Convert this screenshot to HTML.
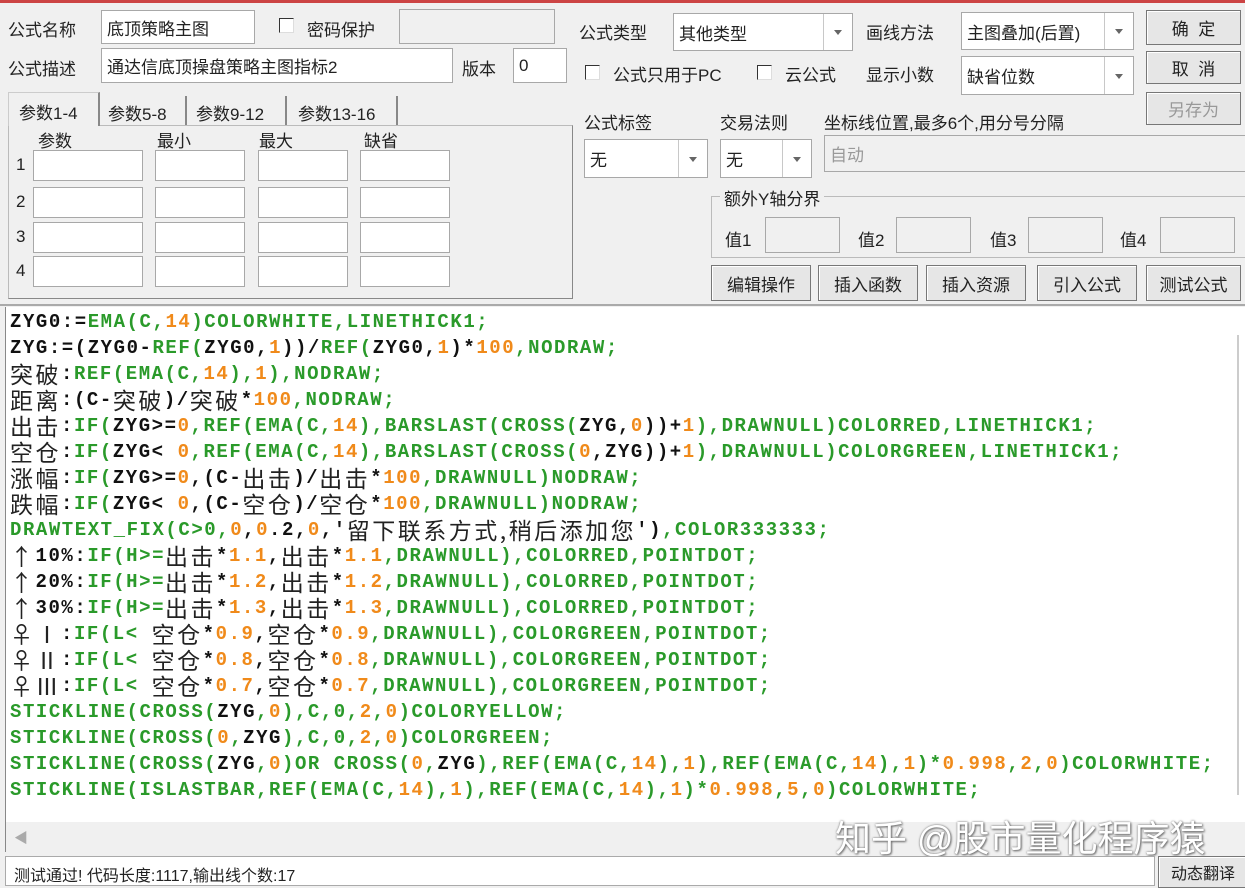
<!DOCTYPE html>
<html><head><meta charset="utf-8"><style>
*{box-sizing:border-box;margin:0;padding:0}
body{width:1245px;height:886px;background:#f0f0f0;position:relative;overflow:hidden;font-family:"Liberation Sans","Noto Sans CJK SC",sans-serif;font-size:17px;color:#222}
.a{position:absolute;white-space:nowrap}
.in{position:absolute;background:#fff;border:1px solid #a8a8a8;padding:0 5px;display:flex;align-items:center;font-size:17px}
.dis{background:#f0f0f0}
.cb{position:absolute;width:15px;height:15px;border:1px solid #333;background:#fff;border-right-color:#ddd;border-bottom-color:#ddd}
.cmb{position:absolute;background:#fff;border:1px solid #a8a8a8;padding-left:5px;display:flex;align-items:center}
.cmb:after{content:"";position:absolute;right:0;top:0;bottom:0;width:28px;border-left:1px solid #c8c8c8;background:linear-gradient(#fff,#fff)}
.cmb i{position:absolute;right:10px;top:50%;margin-top:-2px;border-left:4px solid transparent;border-right:4px solid transparent;border-top:5px solid #666;z-index:2}
.btn{position:absolute;background:#e6e6e6;border:1px solid #777;box-shadow:inset 1px 1px 0 #fff;display:flex;align-items:center;justify-content:center;font-size:17px}
.code{position:absolute;left:5px;top:307px;width:1223px;height:515px;background:#fff;border-left:1px solid #888;font-family:"Liberation Mono","Noto Sans CJK SC",monospace;font-weight:bold;font-size:19px;letter-spacing:1.55px;color:#111;padding:2px 0 0 4px}
.code div{height:26px;line-height:26px;white-space:pre;overflow:hidden}
.g{color:#2a9a2a}.o{color:#f08a1a}
.c{display:inline-block;height:26px;line-height:24px;vertical-align:top;font-family:"Noto Sans CJK SC",sans-serif;font-weight:normal;font-size:23px;letter-spacing:2.5px;color:#222}
</style></head><body>
<div class="a" style="left:0;top:0;width:1245px;height:3px;background:#cc4444"></div>

<div class="a" style="left:8px;top:16px">公式名称</div>
<div class="in" style="left:101px;top:10px;width:154px;height:34px">底顶策略主图</div>
<div class="cb" style="left:279px;top:18px"></div>
<div class="a" style="left:307px;top:16px">密码保护</div>
<div class="in dis" style="left:399px;top:9px;width:156px;height:35px"></div>
<div class="a" style="left:8px;top:55px">公式描述</div>
<div class="in" style="left:101px;top:48px;width:352px;height:35px">通达信底顶操盘策略主图指标2</div>
<div class="a" style="left:462px;top:55px">版本</div>
<div class="in" style="left:513px;top:48px;width:54px;height:35px">0</div>

<div class="a" style="left:8px;top:125px;width:565px;height:174px;border:1px solid #bbb;border-right-color:#888;border-bottom-color:#888"></div>
<div class="a" style="left:8px;top:92px;width:92px;height:34px;background:#f0f0f0;border:1px solid #ccc;border-bottom:none;border-right:2px solid #888;padding:6px 0 0 10px">参数1-4</div>
<div class="a" style="left:102px;top:96px;width:85px;height:29px;border-right:2px solid #888;padding:4px 0 0 6px">参数5-8</div>
<div class="a" style="left:190px;top:96px;width:97px;height:29px;border-right:2px solid #888;padding:4px 0 0 6px">参数9-12</div>
<div class="a" style="left:290px;top:96px;width:108px;height:29px;border-right:2px solid #888;padding:4px 0 0 8px">参数13-16</div>
<div class="a" style="left:38px;top:127px">参数</div>
<div class="a" style="left:157px;top:127px">最小</div>
<div class="a" style="left:259px;top:127px">最大</div>
<div class="a" style="left:364px;top:127px">缺省</div>
<div class="a" style="left:16px;top:155px">1</div>
<div class="a" style="left:16px;top:192px">2</div>
<div class="a" style="left:16px;top:227px">3</div>
<div class="a" style="left:16px;top:261px">4</div>
<div class="in" style="left:33px;top:150px;width:110px;height:31px"></div><div class="in" style="left:155px;top:150px;width:90px;height:31px"></div><div class="in" style="left:258px;top:150px;width:90px;height:31px"></div><div class="in" style="left:360px;top:150px;width:90px;height:31px"></div>
<div class="in" style="left:33px;top:187px;width:110px;height:31px"></div><div class="in" style="left:155px;top:187px;width:90px;height:31px"></div><div class="in" style="left:258px;top:187px;width:90px;height:31px"></div><div class="in" style="left:360px;top:187px;width:90px;height:31px"></div>
<div class="in" style="left:33px;top:222px;width:110px;height:31px"></div><div class="in" style="left:155px;top:222px;width:90px;height:31px"></div><div class="in" style="left:258px;top:222px;width:90px;height:31px"></div><div class="in" style="left:360px;top:222px;width:90px;height:31px"></div>
<div class="in" style="left:33px;top:256px;width:110px;height:31px"></div><div class="in" style="left:155px;top:256px;width:90px;height:31px"></div><div class="in" style="left:258px;top:256px;width:90px;height:31px"></div><div class="in" style="left:360px;top:256px;width:90px;height:31px"></div>

<div class="a" style="left:579px;top:19px">公式类型</div>
<div class="cmb" style="left:673px;top:13px;width:180px;height:38px">其他类型<i></i></div>
<div class="a" style="left:866px;top:19px">画线方法</div>
<div class="cmb" style="left:961px;top:12px;width:173px;height:38px">主图叠加(后置)<i></i></div>
<div class="btn" style="left:1146px;top:10px;width:95px;height:35px">确&nbsp;&nbsp;定</div>
<div class="cb" style="left:585px;top:65px"></div>
<div class="a" style="left:613px;top:61px">公式只用于PC</div>
<div class="cb" style="left:757px;top:65px"></div>
<div class="a" style="left:785px;top:61px">云公式</div>
<div class="a" style="left:866px;top:61px">显示小数</div>
<div class="cmb" style="left:961px;top:56px;width:173px;height:39px">缺省位数<i></i></div>
<div class="btn" style="left:1146px;top:51px;width:95px;height:33px">取&nbsp;&nbsp;消</div>
<div class="btn" style="left:1146px;top:92px;width:95px;height:33px;color:#999">另存为</div>
<div class="a" style="left:584px;top:109px">公式标签</div>
<div class="a" style="left:720px;top:109px">交易法则</div>
<div class="a" style="left:824px;top:109px">坐标线位置,最多6个,用分号分隔</div>
<div class="cmb" style="left:584px;top:139px;width:124px;height:39px">无<i></i></div>
<div class="cmb" style="left:720px;top:139px;width:92px;height:39px">无<i></i></div>
<div class="in dis" style="left:824px;top:135px;width:425px;height:37px;color:#999">自动</div>
<div class="a" style="left:711px;top:196px;width:540px;height:62px;border:1px solid #bbb"></div>
<div class="a" style="left:720px;top:185px;background:#f0f0f0;padding:0 4px">额外Y轴分界</div>
<div class="a" style="left:725px;top:226px">值1</div><div class="in dis" style="left:765px;top:217px;width:75px;height:36px"></div>
<div class="a" style="left:858px;top:226px">值2</div><div class="in dis" style="left:896px;top:217px;width:75px;height:36px"></div>
<div class="a" style="left:990px;top:226px">值3</div><div class="in dis" style="left:1028px;top:217px;width:75px;height:36px"></div>
<div class="a" style="left:1120px;top:226px">值4</div><div class="in dis" style="left:1160px;top:217px;width:75px;height:36px"></div>
<div class="btn" style="left:711px;top:265px;width:100px;height:36px">编辑操作</div>
<div class="btn" style="left:818px;top:265px;width:100px;height:36px">插入函数</div>
<div class="btn" style="left:926px;top:265px;width:100px;height:36px">插入资源</div>
<div class="btn" style="left:1037px;top:265px;width:100px;height:36px">引入公式</div>
<div class="btn" style="left:1146px;top:265px;width:95px;height:36px">测试公式</div>
<div class="a" style="left:0;top:304px;width:1245px;height:2px;background:#aaa"></div>

<div class="code">
<div>ZYG0:=<span class="g">EMA(C,</span><span class="o">14</span><span class="g">)COLORWHITE,LINETHICK1;</span></div>
<div>ZYG:=(ZYG0-<span class="g">REF(</span>ZYG0,<span class="o">1</span>))/<span class="g">REF(</span>ZYG0,<span class="o">1</span>)*<span class="o">100</span><span class="g">,NODRAW;</span></div>
<div><span class="c">突破</span>:<span class="g">REF(EMA(C,</span><span class="o">14</span><span class="g">),</span><span class="o">1</span><span class="g">),NODRAW;</span></div>
<div><span class="c">距离</span>:(C-<span class="c">突破</span>)/<span class="c">突破</span>*<span class="o">100</span><span class="g">,NODRAW;</span></div>
<div><span class="c">出击</span>:<span class="g">IF(</span>ZYG&gt;=<span class="o">0</span><span class="g">,REF(EMA(C,</span><span class="o">14</span><span class="g">),BARSLAST(CROSS(</span>ZYG,<span class="o">0</span>))+<span class="o">1</span><span class="g">),DRAWNULL)COLORRED,LINETHICK1;</span></div>
<div><span class="c">空仓</span>:<span class="g">IF(</span>ZYG&lt; <span class="o">0</span><span class="g">,REF(EMA(C,</span><span class="o">14</span><span class="g">),BARSLAST(CROSS(</span><span class="o">0</span>,ZYG))+<span class="o">1</span><span class="g">),DRAWNULL)COLORGREEN,LINETHICK1;</span></div>
<div><span class="c">涨幅</span>:<span class="g">IF(</span>ZYG&gt;=<span class="o">0</span>,(C-<span class="c">出击</span>)/<span class="c">出击</span>*<span class="o">100</span><span class="g">,DRAWNULL)NODRAW;</span></div>
<div><span class="c">跌幅</span>:<span class="g">IF(</span>ZYG&lt; <span class="o">0</span>,(C-<span class="c">空仓</span>)/<span class="c">空仓</span>*<span class="o">100</span><span class="g">,DRAWNULL)NODRAW;</span></div>
<div><span class="g">DRAWTEXT_FIX(C&gt;0,</span><span class="o">0</span>,<span class="o">0</span>.2,<span class="o">0</span>,'<span class="c">留下联系方式,稍后添加您</span>')<span class="g">,COLOR333333;</span></div>
<div><span class="c">↑</span>10%:<span class="g">IF(H&gt;=</span><span class="c">出击</span>*<span class="o">1.1</span>,<span class="c">出击</span>*<span class="o">1.1</span><span class="g">,DRAWNULL),COLORRED,POINTDOT;</span></div>
<div><span class="c">↑</span>20%:<span class="g">IF(H&gt;=</span><span class="c">出击</span>*<span class="o">1.2</span>,<span class="c">出击</span>*<span class="o">1.2</span><span class="g">,DRAWNULL),COLORRED,POINTDOT;</span></div>
<div><span class="c">↑</span>30%:<span class="g">IF(H&gt;=</span><span class="c">出击</span>*<span class="o">1.3</span>,<span class="c">出击</span>*<span class="o">1.3</span><span class="g">,DRAWNULL),COLORRED,POINTDOT;</span></div>
<div><span class="c">♀Ⅰ</span>:<span class="g">IF(L&lt; </span><span class="c">空仓</span>*<span class="o">0.9</span>,<span class="c">空仓</span>*<span class="o">0.9</span><span class="g">,DRAWNULL),COLORGREEN,POINTDOT;</span></div>
<div><span class="c">♀Ⅱ</span>:<span class="g">IF(L&lt; </span><span class="c">空仓</span>*<span class="o">0.8</span>,<span class="c">空仓</span>*<span class="o">0.8</span><span class="g">,DRAWNULL),COLORGREEN,POINTDOT;</span></div>
<div><span class="c">♀Ⅲ</span>:<span class="g">IF(L&lt; </span><span class="c">空仓</span>*<span class="o">0.7</span>,<span class="c">空仓</span>*<span class="o">0.7</span><span class="g">,DRAWNULL),COLORGREEN,POINTDOT;</span></div>
<div class="g">STICKLINE(CROSS(<span style="color:#111">ZYG</span>,<span class="o">0</span>),C,0,<span class="o">2</span>,<span class="o">0</span>)COLORYELLOW;</div>
<div class="g">STICKLINE(CROSS(<span class="o">0</span>,<span style="color:#111">ZYG</span>),C,0,<span class="o">2</span>,<span class="o">0</span>)COLORGREEN;</div>
<div class="g">STICKLINE(CROSS(<span style="color:#111">ZYG</span>,<span class="o">0</span>)OR CROSS(<span class="o">0</span>,<span style="color:#111">ZYG</span>),REF(EMA(C,<span class="o">14</span>),<span class="o">1</span>),REF(EMA(C,<span class="o">14</span>),<span class="o">1</span>)*<span class="o">0.998</span>,<span class="o">2</span>,<span class="o">0</span>)COLORWHITE;</div>
<div class="g">STICKLINE(ISLASTBAR,REF(EMA(C,<span class="o">14</span>),<span class="o">1</span>),REF(EMA(C,<span class="o">14</span>),<span class="o">1</span>)*<span class="o">0.998</span>,<span class="o">5</span>,<span class="o">0</span>)COLORWHITE;</div>
</div>
<div class="a" style="left:1228px;top:307px;width:17px;height:515px;background:#fff"></div>
<div class="a" style="left:1237px;top:335px;width:2px;height:460px;background:#ccc"></div>
<div class="a" style="left:5px;top:822px;width:1240px;height:30px;background:#f0f0f0;border-left:1px solid #888"></div>
<div class="a" style="left:14px;top:828px;color:#aaa;font-size:14px">◀</div>
<div class="a" style="left:835px;top:810px;font-size:36px;color:#fff;text-shadow:0 0 2px #777,1px 1px 2px #666">知乎 @股市量化程序猿</div>
<div class="a" style="left:5px;top:856px;width:1150px;height:30px;background:#fff;border:1px solid #aaa;padding:5px 0 0 8px;font-size:16px">测试通过! 代码长度:1117,输出线个数:17</div>
<div class="btn" style="left:1158px;top:856px;width:90px;height:32px;font-size:16px">动态翻译</div>
</body></html>
